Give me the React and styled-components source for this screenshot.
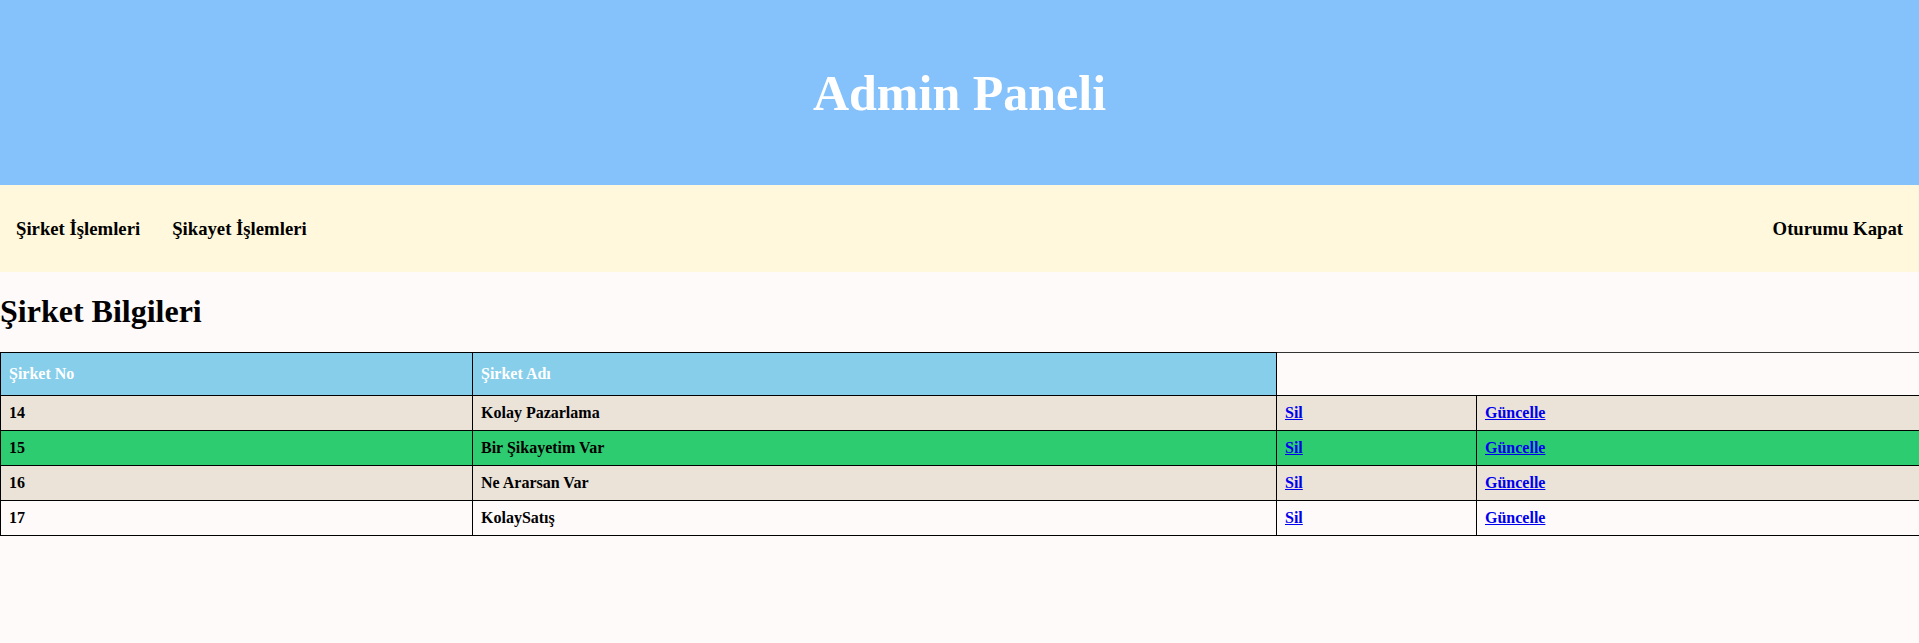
import React from 'react';
import styled, { createGlobalStyle } from 'styled-components';

const GlobalStyle = createGlobalStyle`
  html, body {
    margin: 0;
    padding: 0;
    background-color: #fffafa;
    font-family: "Liberation Serif", "Times New Roman", serif;
  }
`;

const Header = styled.header`
  height: 185px;
  display: flex;
  align-items: center;
  justify-content: center;
  background-color: #85c1fa;
`;

const Title = styled.h1`
  margin: 0;
  color: #fff;
  font-size: 50px;
  font-weight: bold;
`;

const Nav = styled.nav`
  height: 87px;
  display: flex;
  align-items: center;
  justify-content: space-between;
  background-color: #fff8dc;
`;

const NavGroup = styled.div`
  display: flex;
`;

const NavItem = styled.a`
  padding: 0 16px;
  font-size: 18.72px;
  font-weight: bold;
  color: #000;
  text-decoration: none;
  cursor: pointer;
`;

const SectionTitle = styled.h1`
  margin: 21.44px 0;
  font-size: 32px;
  font-weight: bold;
`;

const Table = styled.table`
  width: 100%;
  table-layout: fixed;
  border-collapse: collapse;
  border-top: 1px solid #333;
  font-size: 16px;
`;

const HeadCell = styled.th`
  padding: 12px 8px;
  text-align: left;
  color: #fff;
  background-color: #87ceeb;
  border: 1px solid #000;
`;

const Row = styled.tr`
  background-color: ${({ $bg }) => $bg};
`;

const Cell = styled.td`
  padding: 8px;
  font-weight: bold;
  border: 1px solid #000;
  &:last-child {
    border-right: none;
  }
`;

const Action = styled.a`
  color: #0000ee;
  text-decoration: underline;
  font-weight: bold;
  cursor: pointer;
`;

const companies = [
  { id: 14, name: 'Kolay Pazarlama', bg: '#ebe3d8' },
  { id: 15, name: 'Bir Şikayetim Var', bg: '#2ecc71' },
  { id: 16, name: 'Ne Ararsan Var', bg: '#ebe3d8' },
  { id: 17, name: 'KolaySatış', bg: 'transparent' },
];

function App() {
  return (
    <>
      <GlobalStyle />
      <Header>
        <Title>Admin Paneli</Title>
      </Header>
      <Nav>
        <NavGroup>
          <NavItem>Şirket İşlemleri</NavItem>
          <NavItem>Şikayet İşlemleri</NavItem>
        </NavGroup>
        <NavItem>Oturumu Kapat</NavItem>
      </Nav>
      <SectionTitle>Şirket Bilgileri</SectionTitle>
      <Table>
        <colgroup>
          <col style={{ width: '472px' }} />
          <col style={{ width: '804px' }} />
          <col style={{ width: '200px' }} />
          <col />
        </colgroup>
        <thead>
          <tr>
            <HeadCell>Şirket No</HeadCell>
            <HeadCell>Şirket Adı</HeadCell>
          </tr>
        </thead>
        <tbody>
          {companies.map((c) => (
            <Row key={c.id} $bg={c.bg}>
              <Cell>{c.id}</Cell>
              <Cell>{c.name}</Cell>
              <Cell><Action>Sil</Action></Cell>
              <Cell><Action>Güncelle</Action></Cell>
            </Row>
          ))}
        </tbody>
      </Table>
    </>
  );
}

export default App;
